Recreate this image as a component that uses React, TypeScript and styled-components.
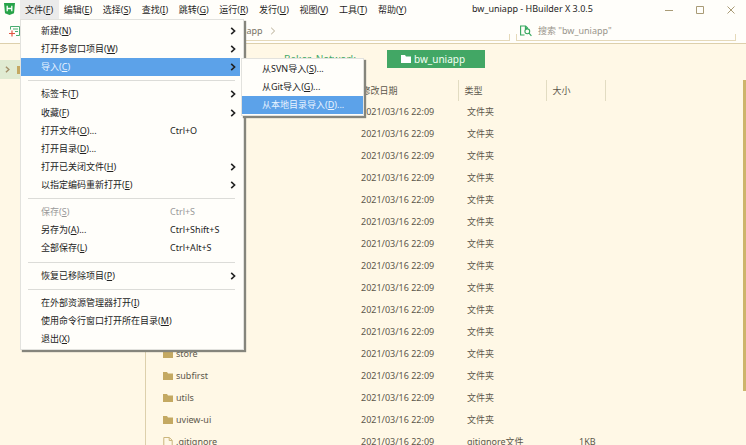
import React from 'react';
import styled, { createGlobalStyle } from 'styled-components';

const Global = createGlobalStyle`
  * { box-sizing: border-box; }
  html, body, #root { height: 100%; margin: 0; }
  body { overflow: hidden; background: #fff8e6; color: #5c574b;
    font-family: 'Noto Sans', 'Noto Sans CJK SC', sans-serif; font-size: 9px; line-height: 18px; }
  button, input { font: inherit; color: inherit; background: none; border: 0; padding: 0; margin: 0; }
  button { text-align: left; white-space: nowrap; }
  u { text-underline-offset: 1px; }
`;

const Window = styled.div`position: relative; height: 100%; display: flex; flex-direction: column;`;
const TitleBar = styled.header`display: flex; height: 19px; flex: none; background: #fffefa; color: #1f1f1f;`;
const Logo = styled.div`width: 20px; padding: 3px 0 0 4px; line-height: 0;`;
const MenuBar = styled.nav`display: flex; flex: none; width: 392px;`;
const MenuButton = styled.button<{ $open?: boolean }>`
  flex: 1 0 auto; padding: 0 5px; background: ${p => (p.$open ? '#ebebeb' : 'transparent')};
`;
const Title = styled.div`margin-left: 60px; white-space: nowrap;`;
const Controls = styled.div`display: flex; margin-left: auto; button { width: 31px; display: grid; place-items: center; }`;

const ToolBar = styled.div`
  display: flex; height: 25px; flex: none; background: #fffefa; border-bottom: 1px solid #ddd0ac; color: #777266;
`;
const NewFile = styled.button`display: flex; align-items: flex-start; width: 233px; padding: 7px 0 0 9px;`;
const Address = styled.div`
  position: relative; display: flex; align-items: center; gap: 6px; flex: 1; height: 22px; padding-top: 3px;
  border-bottom: 1px solid #e5d9b9;
  svg { color: #b5ab92; }
  &::after { content: ''; position: absolute; right: 0; bottom: 0; height: 6px; border-right: 1px solid #e5d9b9; }
`;
const Search = styled.label`
  position: relative; display: flex; align-items: center; gap: 6px; width: 220px; height: 22px;
  margin: 0 10px 0 6px; padding: 3px 4px 0; border-bottom: 1px solid #e5d9b9;
  &::after { content: ''; position: absolute; inset: auto 0 0; height: 6px; border: solid #e5d9b9; border-width: 0 1px; }
  input { flex: 1; min-width: 0; outline: 0; }
  input::placeholder { color: #99958b; opacity: 1; }
`;

const Body = styled.div`display: flex; flex: 1; min-height: 0;`;
const Sidebar = styled.aside`width: 146px; flex: none; padding-top: 16px; border-right: 1px solid #ddd0ac;`;
const TreeRow = styled.div`
  height: 19px; display: flex; align-items: center; gap: 6px; padding-left: 4px; background: #e0ebd2; color: #a3906a;
`;
const Main = styled.main`flex: 1; min-width: 0; display: flex; flex-direction: column;`;
const Tabs = styled.div`display: flex; height: 36px; flex: none; padding: 6px 0 0 138px; font-size: 10px;`;
const Tab = styled.button<{ $active?: boolean }>`
  display: flex; align-items: center; gap: 3px; height: 18px;
  width: ${p => (p.$active ? 98 : 103)}px; padding-left: ${p => (p.$active ? 14 : 0)}px;
  background: ${p => (p.$active ? '#42a765' : 'transparent')}; color: ${p => (p.$active ? '#f4fff4' : '#42a765')};
`;
const Scroll = styled.div`flex: 1; min-height: 0; overflow: hidden; position: relative;`;
const Thumb = styled.div`position: absolute; right: 0; top: 0; width: 3px; height: 311px; background: #cdb56c;`;
const Files = styled.table`
  width: calc(100% - 3px); table-layout: fixed; border-collapse: collapse; line-height: 22px;
  th { height: 21px; padding: 0 0 0 6px; line-height: 21px; font-weight: 400; text-align: left; border-right: 1px solid #e2dcc2; }
  th:last-child { border-right: 0; }
  td { height: 22px; padding: 0; white-space: nowrap; }
  td:nth-child(2) { padding-left: 6px; }
  td:nth-child(3) { padding-left: 9px; }
  td:nth-child(4) { padding-left: 33px; }
`;
const FileName = styled.span`display: flex; align-items: center; gap: 3px; padding-left: 17px;`;

const menuSurface = `
  position: absolute; display: flex; flex-direction: column; background: #fffefa; color: #222;
  border: 1px solid #e2e2de; box-shadow: 2px 2px 1px #85857c;
`;
const Menu = styled.div`${menuSurface} left: 20px; top: 19px; width: 224px; min-height: 331px; padding: 2px 3px 1px 0;`;
const SubMenu = styled.div`${menuSurface} left: 241px; top: 58px; width: 123px; padding: 1px 0; z-index: 2;`;
const Item = styled.button<{ $on?: boolean; $dim?: boolean }>`
  display: flex; align-items: center; flex: 1 0 18px; padding: 0 3px 0 20px;
  background: ${p => (p.$on ? '#5ca2e9' : 'transparent')};
  color: ${p => (p.$on ? '#e8f3ff' : p.$dim ? '#999' : '#222')};
  svg { margin-left: auto; color: #222; }
`;
const Label = styled.span`flex: 0 0 129px;`;
const Rule = styled.hr`flex: none; height: 1px; margin: 4px 5px 4px 7px; border: 0; background: #dcdcd8;`;

const Chevron = ({ size = 8, thin }: { size?: number; thin?: boolean }) => (
  <svg width={size} height={size} viewBox="0 0 8 8" fill="none" stroke="currentColor" strokeWidth={thin ? 1 : 1.6}>
    <path d="M2.2 .8 5.6 4 2.2 7.2" />
  </svg>
);
const Folder = ({ color = '#c4a962' }: { color?: string }) => (
  <svg width="10" height="10" viewBox="0 0 10 10" fill={color}><path d="M0 1h4l1 1.4h5V9H0z" /></svg>
);
const Doc = () => (
  <svg width="10" height="10" viewBox="0 0 10 10" fill="none" stroke="#cbb67c"><path d="M.8 .5h5.6l2.8 2.8v6.2H.8zM6.2.7v2.8H9" /></svg>
);

const bar = [['文件', 'F'], ['编辑', 'E'], ['选择', 'S'], ['查找', 'I'], ['跳转', 'G'], ['运行', 'R'], ['发行', 'U'], ['视图', 'V'], ['工具', 'T'], ['帮助', 'Y']];

type Entry = { text: string; k: string; dots?: boolean; keys?: string; sub?: boolean; on?: boolean; dim?: boolean };
const groups: Entry[][] = [
  [{ text: '新建', k: 'N', sub: true }, { text: '打开多窗口项目', k: 'W', sub: true }, { text: '导入', k: 'C', sub: true, on: true }],
  [
    { text: '标签卡', k: 'T', sub: true }, { text: '收藏', k: 'F', sub: true },
    { text: '打开文件', k: 'O', dots: true, keys: 'Ctrl+O' }, { text: '打开目录', k: 'D', dots: true },
    { text: '打开已关闭文件', k: 'H', sub: true }, { text: '以指定编码重新打开', k: 'E', sub: true },
  ],
  [
    { text: '保存', k: 'S', keys: 'Ctrl+S', dim: true }, { text: '另存为', k: 'A', dots: true, keys: 'Ctrl+Shift+S' },
    { text: '全部保存', k: 'L', keys: 'Ctrl+Alt+S' },
  ],
  [{ text: '恢复已移除项目', k: 'P', sub: true }],
  [{ text: '在外部资源管理器打开', k: 'I' }, { text: '使用命令行窗口打开所在目录', k: 'M' }, { text: '退出', k: 'X' }],
];
const imports: Entry[] = [
  { text: '从SVN导入', k: 'S', dots: true }, { text: '从Git导入', k: 'G', dots: true }, { text: '从本地目录导入', k: 'D', dots: true, on: true },
];
const names: string[] = [...Array(11).fill(''), 'store', 'subfirst', 'utils', 'uview-ui'];

const MenuItem = ({ e }: { e: Entry }) => (
  <Item role="menuitem" $on={e.on} $dim={e.dim} disabled={e.dim}>
    <Label>{e.text}(<u>{e.k}</u>){e.dots && '...'}</Label>
    {e.keys}
    {e.sub && <Chevron />}
  </Item>
);

export default function App() {
  return (
    <Window>
      <Global />
      <TitleBar>
        <Logo>
          <svg width="11" height="12" viewBox="0 0 11 12"><path d="M0 0h11l-1 10.2L5.5 12 1 10.2z" fill="#27a348" /><path d="M3.2 2.8v5.4M7.8 2.8v5.4M3.2 5.5h4.6" stroke="#fff" strokeWidth="1.3" /></svg>
        </Logo>
        <MenuBar>{bar.map(([t, k], i) => <MenuButton key={k} $open={i === 0}>{t}(<u>{k}</u>)</MenuButton>)}</MenuBar>
        <Title>bw_uniapp - HBuilder X 3.0.5</Title>
        <Controls>
          <button aria-label="最小化"><svg width="8" height="8" stroke="#a99b76"><path d="M0 4.5h8" /></svg></button>
          <button aria-label="最大化"><svg width="8" height="8" fill="none" stroke="#a99b76"><path d="M.5.5h7v7h-7z" /></svg></button>
          <button aria-label="关闭"><svg width="8" height="8" stroke="#a99b76"><path d="m.5.5 7 7m0-7-7 7" /></svg></button>
        </Controls>
      </TitleBar>
      <ToolBar>
        <NewFile aria-label="新建文件">
          <svg width="12" height="12" viewBox="0 0 12 12" fill="none"><path d="M1.5 3.5v-3h9v9H7M4 3h5M6 5.5h3" stroke="#49ac70" /><path d="M0 7.5h6M3 4.5v6" stroke="#e05442" strokeWidth="1.2" /></svg>
        </NewFile>
        <Address>uniapp <Chevron thin /></Address>
        <Search>
          <svg width="12" height="12" viewBox="0 0 12 12" fill="none" stroke="#35a75e" strokeWidth="1.1"><path d="M4.5 10H.6V1h5l2.2 2.2M5.4 1v2.4h2.4" /><circle cx="7.3" cy="6.3" r="2.4" /><path d="m9 8.2 2.4 2.6" /></svg>
          <input aria-label="搜索" placeholder={'搜索 "bw_uniapp"'} />
        </Search>
      </ToolBar>
      <Body>
        <Sidebar><TreeRow><Chevron size={7} /><Folder /></TreeRow></Sidebar>
        <Main>
          <Tabs><Tab>Baker_Network</Tab><Tab $active><Folder color="#fff" />bw_uniapp</Tab></Tabs>
          <Scroll>
            <Files>
              <colgroup><col style={{ width: 209 }} /><col style={{ width: 103 }} /><col style={{ width: 88 }} /><col style={{ width: 59 }} /><col /></colgroup>
              <thead><tr><th /><th>修改日期</th><th>类型</th><th>大小</th><th /></tr></thead>
              <tbody>
                {names.map((n, i) => <tr key={i}><td><FileName><Folder />{n}</FileName></td><td>2021/03/16 22:09</td><td>文件夹</td><td /><td /></tr>)}
                <tr><td><FileName><Doc />.gitignore</FileName></td><td>2021/03/16 22:09</td><td>gitignore文件</td><td>1KB</td><td /></tr>
              </tbody>
            </Files>
            <Thumb />
          </Scroll>
        </Main>
      </Body>
      <Menu role="menu">
        {groups.map((g, i) => <React.Fragment key={i}>{i > 0 && <Rule />}{g.map(e => <MenuItem key={e.text} e={e} />)}</React.Fragment>)}
      </Menu>
      <SubMenu role="menu">{imports.map(e => <MenuItem key={e.text} e={e} />)}</SubMenu>
    </Window>
  );
}
